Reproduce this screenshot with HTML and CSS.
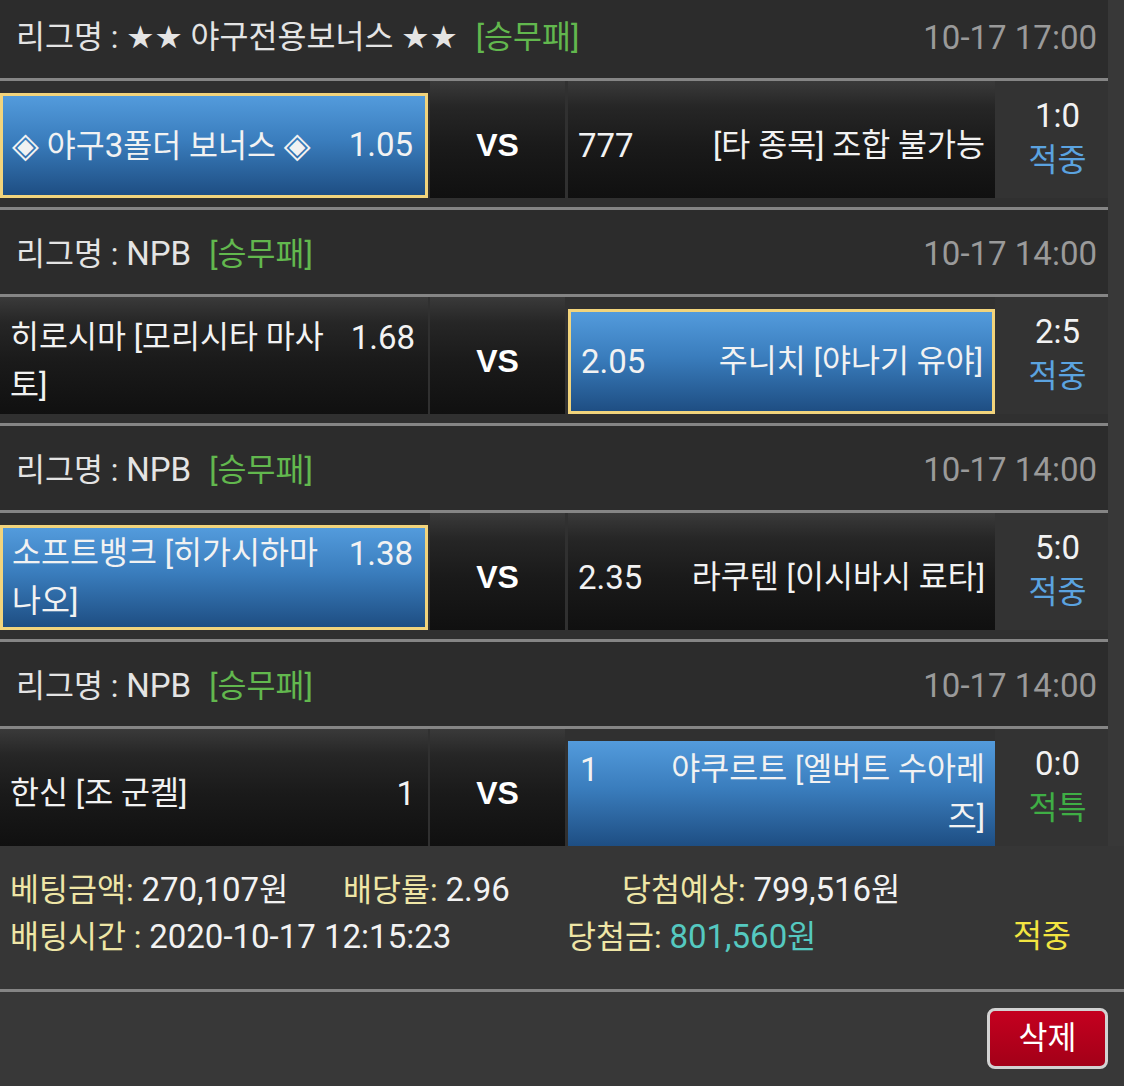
FILE: index.html
```html
<!DOCTYPE html>
<html lang="ko">
<head>
<meta charset="utf-8">
<title>배팅내역</title>
<link rel="stylesheet" href="styles.css">
</head>
<body>
<div class="list">
  <section class="game">
    <div class="league">
      <div class="league-name">리그명 : <span class="sym">★★</span> 야구전용보너스 <span class="sym">★★</span><span class="market">[승무패]</span></div>
      <div class="time num">10-17 17:00</div>
    </div>
    <div class="match">
      <div class="team home picked"><div class="box"><div class="pick"><span class="name"><span class="sym dia">◈</span> 야구<span class="num">3</span>폴더 보너스 <span class="sym dia">◈</span></span><span class="odds num">1.05</span></div></div></div>
      <div class="vs"><span>VS</span></div>
      <div class="team away"><div class="box"><div class="pick"><span class="odds num">777</span><span class="name">[타 종목] 조합 불가능</span></div></div></div>
      <div class="score"><span class="num">1:0</span><span class="hit">적중</span></div>
    </div>
  </section>
  <section class="game">
    <div class="league">
      <div class="league-name">리그명 : <span class="num">NPB</span><span class="market">[승무패]</span></div>
      <div class="time num">10-17 14:00</div>
    </div>
    <div class="match">
      <div class="team home"><div class="box"><div class="pick"><span class="name">히로시마 [모리시타 마사토]</span><span class="odds num">1.68</span></div></div></div>
      <div class="vs"><span>VS</span></div>
      <div class="team away picked"><div class="box"><div class="pick"><span class="odds num">2.05</span><span class="name">주니치 [야나기 유야]</span></div></div></div>
      <div class="score"><span class="num">2:5</span><span class="hit">적중</span></div>
    </div>
  </section>
  <section class="game">
    <div class="league">
      <div class="league-name">리그명 : <span class="num">NPB</span><span class="market">[승무패]</span></div>
      <div class="time num">10-17 14:00</div>
    </div>
    <div class="match">
      <div class="team home picked"><div class="box"><div class="pick"><span class="name">소프트뱅크 [히가시하마 나오]</span><span class="odds num">1.38</span></div></div></div>
      <div class="vs"><span>VS</span></div>
      <div class="team away"><div class="box"><div class="pick"><span class="odds num">2.35</span><span class="name">라쿠텐 [이시바시 료타]</span></div></div></div>
      <div class="score"><span class="num">5:0</span><span class="hit">적중</span></div>
    </div>
  </section>
  <section class="game">
    <div class="league">
      <div class="league-name">리그명 : <span class="num">NPB</span><span class="market">[승무패]</span></div>
      <div class="time num">10-17 14:00</div>
    </div>
    <div class="match">
      <div class="team home"><div class="box"><div class="pick"><span class="name">한신 [조 군켈]</span><span class="odds num">1</span></div></div></div>
      <div class="vs"><span>VS</span></div>
      <div class="team away picked plain"><div class="box"><div class="pick"><span class="odds num">1</span><span class="name">야쿠르트 [엘버트 수아레즈]</span></div></div></div>
      <div class="score"><span class="num">0:0</span><span class="special">적특</span></div>
    </div>
  </section>
</div>

<div class="summary">
  <div class="sum-row first">
    <div><span class="label">베팅금액:</span> <span class="num">270,107</span>원</div>
    <div><span class="label">배당률:</span> <span class="num">2.96</span></div>
    <div><span class="label">당첨예상:</span> <span class="num">799,516</span>원</div>
  </div>
  <div class="sum-row second">
    <div><span class="label">배팅시간 :</span> <span class="num">2020-10-17 12:15:23</span></div>
    <div><span class="label">당첨금:</span> <span class="won"><span class="num">801,560</span>원</span></div>
    <div class="result">적중</div>
  </div>
</div>

<div class="actions">
  <button class="delete" type="button">삭제</button>
</div>
</body>
</html>
```

FILE: styles.css
```css
html, body {
  margin: 0;
  padding: 0;
}

body {
  background: #383838;
  color: #f2f2f2;
  font-family: Roboto, "Noto Sans CJK KR", sans-serif;
  font-size: 31.5px;
  line-height: 1.45;
}

.num {
  font-size: 33px;
}

.sym {
  font-family: "DejaVu Sans", sans-serif;
}

.dia {
  font-size: 35px;
}

.list {
  width: 1108px;
  margin-top: -6px;
  background: #313131;
}

.league {
  height: 87px;
  box-sizing: border-box;
  display: flex;
  align-items: center;
  justify-content: space-between;
  padding: 4px 11px 0 16px;
  background: #2c2c2c;
  border-bottom: 3px solid #858585;
  color: #e4e4e4;
}

.market {
  margin-left: 18px;
  color: #62b84e;
}

.time {
  color: #9a9a9a;
}

.match {
  display: grid;
  grid-template-columns: 428px 140px 427px 113px;
  grid-template-rows: 117px;
  padding-bottom: 9px;
  border-bottom: 3px solid #858585;
  background: #303030;
}

.game:last-child .match {
  padding-bottom: 0;
  border-bottom: none;
}

.team,
.vs {
  background: linear-gradient(#3a3a3a 0%, #262626 22%, #1a1a1a 55%, #101010 100%);
}

.team {
  padding-top: 12px;
  box-sizing: border-box;
}

.team.picked {
  background: none;
}

.box {
  height: 105px;
  box-sizing: border-box;
  display: flex;
  align-items: center;
  padding: 0 13px 0 10px;
}

.away .box {
  padding: 0 10px;
}

.picked .box {
  background: linear-gradient(#539bdc 0%, #3a7dbd 45%, #1e4e83 100%);
  border: 3px solid #f2d47c;
  padding: 0 12px 0 9px;
}

.away.picked .box {
  padding: 0 9px 0 10px;
}

.picked.plain .box {
  border: none;
  padding: 0 10px 0 12px;
}

.pick {
  display: flex;
  width: 100%;
  justify-content: space-between;
  align-items: flex-start;
  line-height: 48px;
}

.name {
  max-width: 322px;
}

.away .name {
  text-align: right;
}

.odds {
  flex: none;
}

.vs {
  margin: 0 3px 0 2px;
  padding-top: 12px;
  box-sizing: border-box;
  display: flex;
  align-items: center;
  justify-content: center;
  font-family: "Liberation Sans", Arial, sans-serif;
  font-weight: bold;
  font-size: 32px;
  color: #ffffff;
}

.score {
  display: flex;
  flex-direction: column;
  align-items: center;
  justify-content: center;
  line-height: 45px;
  padding: 0 0 4px 12px;
  box-sizing: border-box;
  background: #333333;
}

.hit {
  color: #5ba3e0;
}

.special {
  color: #3fae45;
}

.summary {
  background: #363636;
  padding: 21px 0 28px 10px;
  border-bottom: 3px solid #858585;
  line-height: 46px;
  color: #f2f2f2;
}

.sum-row {
  display: grid;
}

.sum-row.first {
  grid-template-columns: 333px 279px auto;
}

.sum-row.second {
  grid-template-columns: 557px 446px auto;
}

.label {
  color: #efe6a6;
}

.won {
  color: #55c9c0;
}

.result {
  color: #f3e541;
}

.actions {
  display: flex;
  justify-content: flex-end;
  padding: 16px 16px 0 0;
}

.delete {
  width: 121px;
  height: 61px;
  box-sizing: border-box;
  border: 3px solid #d2d2d2;
  border-radius: 8px;
  background: linear-gradient(#c4001f, #a30018);
  color: #ffffff;
  font-family: Roboto, "Noto Sans CJK KR", sans-serif;
  font-size: 31.5px;
  padding: 0;
  line-height: 1;
}
```
